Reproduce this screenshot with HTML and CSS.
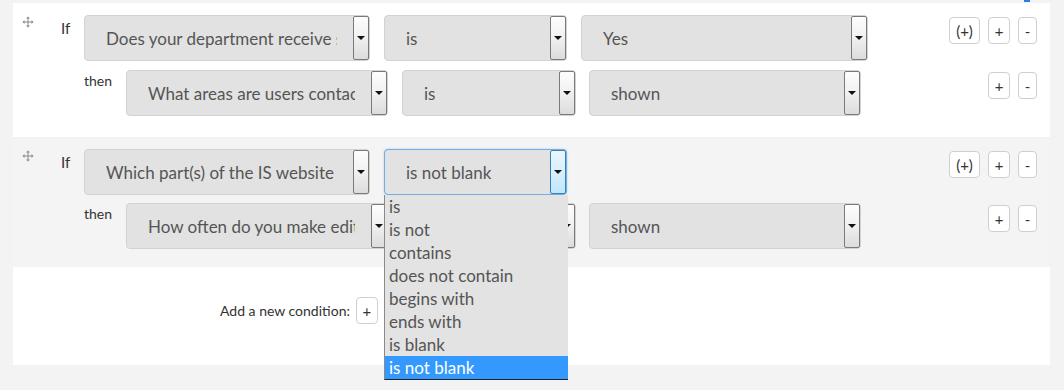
FILE: index.html
```html
<!DOCTYPE html>
<html lang="en">
  <head>
    <meta charset="UTF-8" />
    <title>Conditions</title>
    <link rel="stylesheet" href="styles.css">
  </head>
  <body>
    <div class="top-mark"></div>
    <div class="panel">
      <!-- rule 1 -->
      <div class="rule">
        <div class="row">
          <span class="handle">
            <svg width="12" height="12" viewBox="0 0 12 12"><path d="M6 0.5 L8 2.5 H6.5 V5.5 H9.5 V4 L11.5 6 L9.5 8 V6.5 H6.5 V9.5 H8 L6 11.5 L4 9.5 H5.5 V6.5 H2.5 V8 L0.5 6 L2.5 4 V5.5 H5.5 V2.5 H4 Z" fill="#8a8a8a"/></svg>
          </span>
          <span class="label">If</span>
          <div class="select w286"><span class="select-text">Does your department receive student emails</span><span class="select-btn"></span></div>
          <div class="select w183"><span class="select-text">is</span><span class="select-btn"></span></div>
          <div class="select w287"><span class="select-text">Yes</span><span class="select-btn"></span></div>
          <div class="actions">
            <button class="btn wide">(+)</button>
            <button class="btn">+</button>
            <button class="btn small">-</button>
          </div>
        </div>
        <div class="row then-row">
          <span class="label then">then</span>
          <div class="select w262"><span class="select-text">What areas are users contacting you about</span><span class="select-btn"></span></div>
          <div class="select w174"><span class="select-text">is</span><span class="select-btn"></span></div>
          <div class="select w272"><span class="select-text">shown</span><span class="select-btn"></span></div>
          <div class="actions">
            <button class="btn">+</button>
            <button class="btn small">-</button>
          </div>
        </div>
      </div>

      <!-- rule 2 -->
      <div class="rule alt">
        <div class="row">
          <span class="handle">
            <svg width="12" height="12" viewBox="0 0 12 12"><path d="M6 0.5 L8 2.5 H6.5 V5.5 H9.5 V4 L11.5 6 L9.5 8 V6.5 H6.5 V9.5 H8 L6 11.5 L4 9.5 H5.5 V6.5 H2.5 V8 L0.5 6 L2.5 4 V5.5 H5.5 V2.5 H4 Z" fill="#8a8a8a"/></svg>
          </span>
          <span class="label">If</span>
          <div class="select w286"><span class="select-text">Which part(s) of the IS website do you edit</span><span class="select-btn"></span></div>
          <div class="select w183 focused">
            <span class="select-text">is not blank</span><span class="select-btn"></span>
            <ul class="options">
              <li>is</li>
              <li>is not</li>
              <li>contains</li>
              <li>does not contain</li>
              <li>begins with</li>
              <li>ends with</li>
              <li>is blank</li>
              <li class="selected">is not blank</li>
            </ul>
          </div>
          <div class="actions">
            <button class="btn wide">(+)</button>
            <button class="btn">+</button>
            <button class="btn small">-</button>
          </div>
        </div>
        <div class="row then-row">
          <span class="label then">then</span>
          <div class="select w262"><span class="select-text">How often do you make edits</span><span class="select-btn"></span></div>
          <div class="select w174"><span class="select-text">is</span><span class="select-btn"></span></div>
          <div class="select w272"><span class="select-text">shown</span><span class="select-btn"></span></div>
          <div class="actions">
            <button class="btn">+</button>
            <button class="btn small">-</button>
          </div>
        </div>
      </div>

      <!-- add condition -->
      <div class="add-row">
        <span class="add-label">Add a new condition:</span>
        <button class="btn">+</button>
      </div>
    </div>
  </body>
</html>
```

FILE: styles.css
```css
body {
  font-family: "Lato", "Open Sans", sans-serif;
  background: #f3f3f3;
  margin: 0;
  padding: 3px 14px 25px 13px;
  color: #333;
}

.top-mark {
  position: absolute;
  top: 0;
  left: 1024px;
  width: 6px;
  height: 2px;
  background: #2b7de0;
}

.panel {
  background: #fff;
}

.rule {
  padding: 12px 13px 21px 0;
  background: #fff;
}

.rule.alt {
  background: #f4f4f4;
  border-top: 1px solid #f0f0f0;
  padding-top: 11px;
  padding-bottom: 18px;
}

.rule.alt .then-row {
  margin-top: 8px;
}

.row {
  display: flex;
  align-items: flex-start;
}

.then-row {
  margin-top: 9px;
  padding-left: 71px;
}

.handle {
  width: 48px;
  padding-left: 9px;
  padding-top: 1px;
  box-sizing: border-box;
  line-height: 0;
}

.label {
  width: 23px;
  font-size: 15px;
  padding-top: 4px;
  color: #333;
}

.label.then {
  width: 42px;
  font-size: 14px;
  padding-top: 2px;
}

.select {
  position: relative;
  height: 46px;
  box-sizing: border-box;
  background: #e2e2e2;
  border: 1px solid #d2d2d2;
  border-radius: 4px;
  margin-right: 14px;
  display: flex;
  align-items: center;
  color: #555;
  font-size: 17px;
}

.select-text {
  flex: 1;
  min-width: 0;
  margin: 0 16px 0 21px;
  white-space: nowrap;
  overflow: hidden;
}

.select-btn {
  flex: none;
  width: 16px;
  height: 44px;
  box-sizing: border-box;
  border: 1px solid #7a7a7a;
  border-radius: 2px;
  background: linear-gradient(#fdfdfd, #f2f2f2 45%, #dcdcdc);
  position: relative;
}

.select-btn::after {
  content: "";
  position: absolute;
  left: 3px;
  top: 19px;
  border-left: 4px solid transparent;
  border-right: 4px solid transparent;
  border-top: 4px solid #111;
}

.select.focused {
  border-color: #72aee6;
  box-shadow: 0 0 2px rgba(102, 175, 233, 0.6);
}

.select.focused .select-btn {
  border-color: #3c7fb1;
  background: linear-gradient(#eaf6fd, #d9f0fc 45%, #bee6fd);
}

.w286 { width: 286px; }
.w183 { width: 183px; }
.w287 { width: 287px; }
.w262 { width: 262px; }
.w174 { width: 174px; margin-right: 13px; }
.w272 { width: 272px; }

.actions {
  margin-left: auto;
  display: flex;
  gap: 8px;
  padding-top: 2px;
}

.btn {
  font-family: "Lato", "Open Sans", sans-serif;
  background: #fff;
  border: 1px solid #cfcfcf;
  border-radius: 4px;
  height: 27px;
  width: 22px;
  padding: 0;
  font-size: 15px;
  color: #333;
  cursor: pointer;
}

.btn.wide {
  width: 31px;
}

.btn.small {
  width: 19px;
}

.options {
  position: absolute;
  top: 45px;
  left: -1px;
  width: 184px;
  box-sizing: border-box;
  margin: 0;
  padding: 0;
  list-style: none;
  background: #e3e3e3;
  border-left: 1px solid #8a8a8a;
  border-bottom: 1px solid #222;
  z-index: 10;
}

.options li {
  height: 23px;
  line-height: 23px;
  padding-left: 4px;
  font-size: 17px;
  color: #555;
}

.options li.selected {
  background: #3399ff;
  color: #fff;
}

.add-row {
  background: #fff;
  padding: 30px 0 41px 207px;
  display: flex;
  align-items: center;
  gap: 6px;
}

.add-label {
  font-size: 14px;
  color: #333;
}
```
